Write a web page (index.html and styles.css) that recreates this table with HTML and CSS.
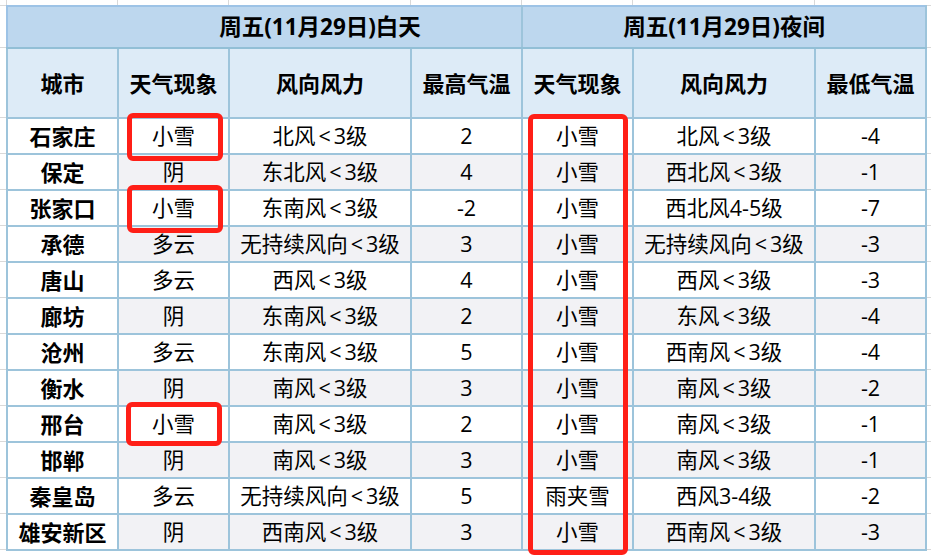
FILE: index.html
```html
<!DOCTYPE html>
<html lang="zh-CN">
<head>
<meta charset="utf-8">
<title>天气预报</title>
<link rel="stylesheet" href="styles.css">
</head>
<body>
<div class="sheet">
  <table class="wx">
    <colgroup>
      <col class="c-city"><col class="c-sky"><col class="c-wind"><col class="c-temp">
      <col class="c-sky"><col class="c-wind"><col class="c-temp2">
    </colgroup>
    <thead>
      <tr class="title">
        <th colspan="4" class="day">周五(11月29日)白天</th>
        <th colspan="3">周五(11月29日)夜间</th>
      </tr>
      <tr class="head">
        <th>城市</th><th>天气现象</th><th>风向风力</th><th>最高气温</th>
        <th>天气现象</th><th>风向风力</th><th>最低气温</th>
      </tr>
    </thead>
    <tbody>
      <tr><th>石家庄</th><td>小雪</td><td>北风<span class="lt">&lt;</span>3级</td><td>2</td><td>小雪</td><td>北风<span class="lt">&lt;</span>3级</td><td>-4</td></tr>
      <tr class="alt"><th>保定</th><td>阴</td><td>东北风<span class="lt">&lt;</span>3级</td><td>4</td><td>小雪</td><td>西北风<span class="lt">&lt;</span>3级</td><td>-1</td></tr>
      <tr><th>张家口</th><td>小雪</td><td>东南风<span class="lt">&lt;</span>3级</td><td>-2</td><td>小雪</td><td>西北风4-5级</td><td>-7</td></tr>
      <tr class="alt"><th>承德</th><td>多云</td><td>无持续风向<span class="lt">&lt;</span>3级</td><td>3</td><td>小雪</td><td>无持续风向<span class="lt">&lt;</span>3级</td><td>-3</td></tr>
      <tr><th>唐山</th><td>多云</td><td>西风<span class="lt">&lt;</span>3级</td><td>4</td><td>小雪</td><td>西风<span class="lt">&lt;</span>3级</td><td>-3</td></tr>
      <tr class="alt"><th>廊坊</th><td>阴</td><td>东南风<span class="lt">&lt;</span>3级</td><td>2</td><td>小雪</td><td>东风<span class="lt">&lt;</span>3级</td><td>-4</td></tr>
      <tr><th>沧州</th><td>多云</td><td>东南风<span class="lt">&lt;</span>3级</td><td>5</td><td>小雪</td><td>西南风<span class="lt">&lt;</span>3级</td><td>-4</td></tr>
      <tr class="alt"><th>衡水</th><td>阴</td><td>南风<span class="lt">&lt;</span>3级</td><td>3</td><td>小雪</td><td>南风<span class="lt">&lt;</span>3级</td><td>-2</td></tr>
      <tr><th>邢台</th><td>小雪</td><td>南风<span class="lt">&lt;</span>3级</td><td>2</td><td>小雪</td><td>南风<span class="lt">&lt;</span>3级</td><td>-1</td></tr>
      <tr class="alt"><th>邯郸</th><td>阴</td><td>南风<span class="lt">&lt;</span>3级</td><td>3</td><td>小雪</td><td>南风<span class="lt">&lt;</span>3级</td><td>-1</td></tr>
      <tr><th>秦皇岛</th><td>多云</td><td>无持续风向<span class="lt">&lt;</span>3级</td><td>5</td><td>雨夹雪</td><td>西风3-4级</td><td>-2</td></tr>
      <tr class="alt"><th>雄安新区</th><td>阴</td><td>西南风<span class="lt">&lt;</span>3级</td><td>3</td><td>小雪</td><td>西南风<span class="lt">&lt;</span>3级</td><td>-3</td></tr>
    </tbody>
  </table>
  <div class="mark m1"></div>
  <div class="mark m2"></div>
  <div class="mark m3"></div>
  <div class="mark m4"></div>
</div>
</body>
</html>
```
FILE: styles.css
```css
html, body {
  margin: 0;
  padding: 0;
  background: #ffffff;
}
body {
  font-family: "Open Sans", "Noto Sans CJK SC", sans-serif;
  color: #000;
}
.sheet {
  position: relative;
  width: 931px;
  height: 555px;
  overflow: hidden;
  padding: 5px 0 0 6px;
  box-sizing: border-box;
  background:
    linear-gradient(#d9d9d9, #d9d9d9) 0 5px / 6px 1px no-repeat,
    linear-gradient(#d9d9d9, #d9d9d9) 0 47px / 6px 1px no-repeat,
    linear-gradient(#d9d9d9, #d9d9d9) 6px 0 / 1px 5px no-repeat,
    linear-gradient(#d9d9d9, #d9d9d9) 117px 0 / 1px 5px no-repeat,
    linear-gradient(#d9d9d9, #d9d9d9) 228px 0 / 1px 5px no-repeat,
    linear-gradient(#d9d9d9, #d9d9d9) 410px 0 / 1px 5px no-repeat,
    linear-gradient(#d9d9d9, #d9d9d9) 521px 0 / 1px 5px no-repeat,
    linear-gradient(#d9d9d9, #d9d9d9) 632px 0 / 1px 5px no-repeat,
    linear-gradient(#d9d9d9, #d9d9d9) 814px 0 / 1px 5px no-repeat,
    linear-gradient(#d9d9d9, #d9d9d9) 926px 5px / 5px 1px no-repeat,
    linear-gradient(#d9d9d9, #d9d9d9) 926px 47px / 5px 1px no-repeat,
    repeating-linear-gradient(#d9d9d9 0 1px, transparent 1px 36px) 0 117px / 6px 440px no-repeat,
    repeating-linear-gradient(#d9d9d9 0 1px, transparent 1px 36px) 926px 117px / 5px 440px no-repeat,
    #ffffff;
}
.wx {
  border-collapse: collapse;
  table-layout: fixed;
  width: 920px;
  font-size: 21.5px;
  line-height: 1;
}
.c-city, .c-sky, .c-temp { width: 111px; }
.c-wind { width: 182px; }
.c-temp2 { width: 111px; }
.wx th, .wx td {
  border: 2px solid #9dc4db;
  padding: 0;
  text-align: center;
  vertical-align: middle;
  white-space: nowrap;
}
.wx th { font-weight: 700; font-size: 22px; }
.wx td { font-weight: 400; }
.lt { margin: 0 3px; }
.title th {
  height: 40px;
  background: #bdd7ee;
  font-size: 22.5px;
  border-top-color: #9dc3e6;
  border-bottom-color: #92bfd6;
}
.title th.day {
  padding-left: 111px;
  border-left-color: #9dc3e6;
}
.head th {
  height: 68px;
  background: #ddebf7;
}
tbody tr { height: 36px; }
tbody th { background: #ffffff; }
tbody td { background: #ffffff; }
tbody tr.alt td { background: #f2f2f5; }
.mark {
  position: absolute;
  border: 5px solid #ff1f17;
  border-radius: 6px;
  box-sizing: border-box;
}
.m1 { left: 127px; top: 113px; width: 96px; height: 48px; }
.m2 { left: 127px; top: 185px; width: 96px; height: 48px; }
.m3 { left: 126px; top: 402px; width: 96px; height: 44px; }
.m4 { left: 528px; top: 114px; width: 100px; height: 441px; }
```
